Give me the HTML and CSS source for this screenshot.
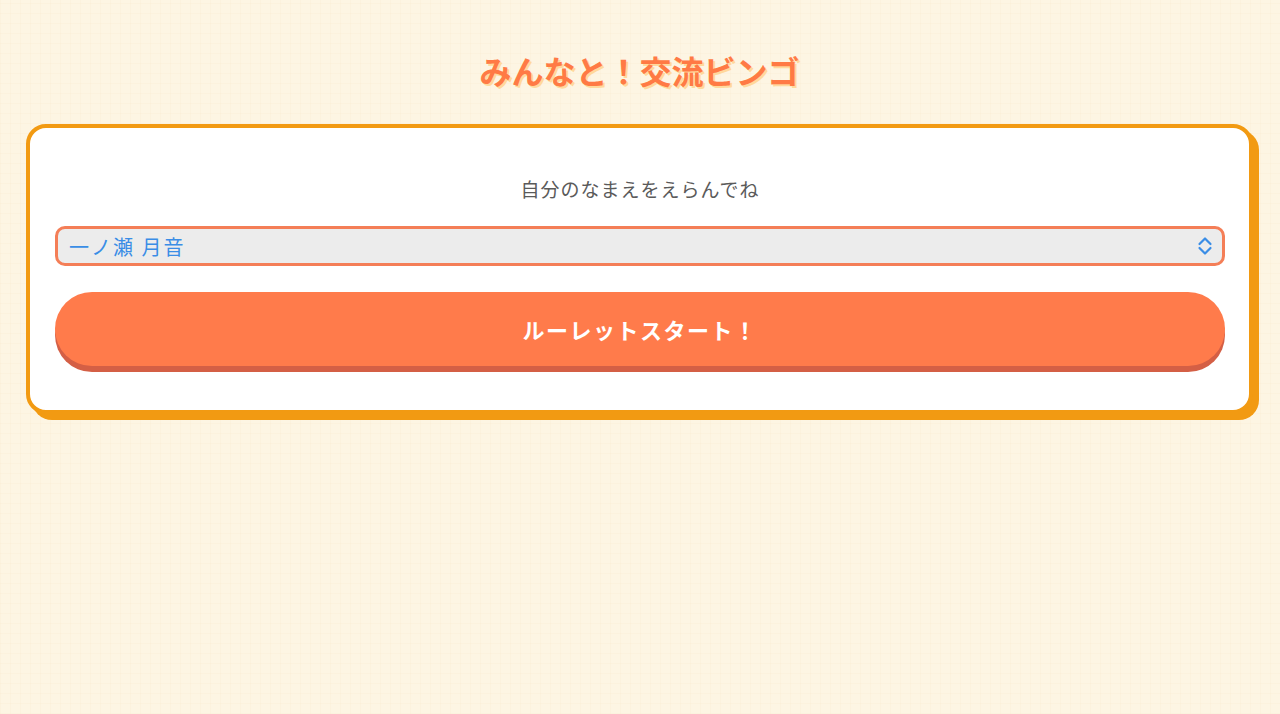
FILE: index.html
```html
<!DOCTYPE html>
<html lang="ja">
<head>
<meta charset="utf-8">
<title>みんなと！交流ビンゴ</title>
<link rel="stylesheet" href="styles.css">
</head>
<body>
<main class="page">
  <h1 class="title">みんなと！交流ビンゴ</h1>
  <section class="card">
    <p class="label">自分のなまえをえらんでね</p>
    <div class="select-wrap">
      <select class="select">
        <option>一ノ瀬 月音</option>
      </select>
      <svg class="select-icon" width="16" height="20" viewBox="0 0 16 20" aria-hidden="true">
        <path d="M2.5 8 L8 2.5 L13.5 8" fill="none" stroke="#3a8de6" stroke-width="2.2" stroke-linecap="round" stroke-linejoin="round"/>
        <path d="M2.5 12 L8 17.5 L13.5 12" fill="none" stroke="#3a8de6" stroke-width="2.2" stroke-linecap="round" stroke-linejoin="round"/>
      </svg>
    </div>
    <button class="start" type="button">ルーレットスタート！</button>
  </section>
</main>
</body>
</html>
```
FILE: styles.css
```css
html, body {
  margin: 0;
  padding: 0;
}
body {
  background-color: #fdf5e3;
  background-image:
    repeating-linear-gradient(0deg, rgba(240, 205, 150, 0.07) 0 1px, transparent 1px 10px),
    repeating-linear-gradient(90deg, rgba(240, 205, 150, 0.07) 0 1px, transparent 1px 10px);
  font-family: "Noto Sans CJK JP", "Noto Sans", sans-serif;
  min-height: 714px;
}
.page {
  display: flex;
  flex-direction: column;
  padding: 50px 27px 0 26px;
}
.title {
  margin: 0;
  text-align: center;
  font-size: 32px;
  line-height: 40px;
  font-weight: 700;
  color: #ff7a45;
  text-shadow: 2px 2px 0 #ffd99c;
}
.card {
  margin-top: 34px;
  background: #fff;
  border: 4px solid #f29a12;
  border-radius: 20px;
  box-shadow: 6px 6px 0 #f29a12;
  padding: 48px 24px 44px 25px;
  display: flex;
  flex-direction: column;
}
.label {
  margin: 0;
  text-align: center;
  font-size: 19px;
  line-height: 26px;
  letter-spacing: 1px;
  color: #5a5a5a;
}
.select-wrap {
  position: relative;
  margin-top: 24px;
}
.select {
  appearance: none;
  -webkit-appearance: none;
  display: block;
  width: 100%;
  height: 40px;
  box-sizing: border-box;
  border: 3px solid #f47e57;
  border-radius: 10px;
  background: #ececec;
  color: #3a8de6;
  font-family: "Noto Sans CJK JP", "Noto Sans", sans-serif;
  font-size: 20px;
  letter-spacing: 2px;
  padding: 0 40px 0 11px;
  outline: none;
}
.select-icon {
  position: absolute;
  right: 12px;
  top: 10px;
  pointer-events: none;
}
.start {
  margin-top: 26px;
  height: 74px;
  border: none;
  border-radius: 40px;
  background: #ff7b4b;
  box-shadow: 0 6px 0 #d45f45;
  color: #fff;
  font-family: "Noto Sans CJK JP", "Noto Sans", sans-serif;
  font-size: 22px;
  font-weight: 700;
  letter-spacing: 1.5px;
  cursor: pointer;
}
```
